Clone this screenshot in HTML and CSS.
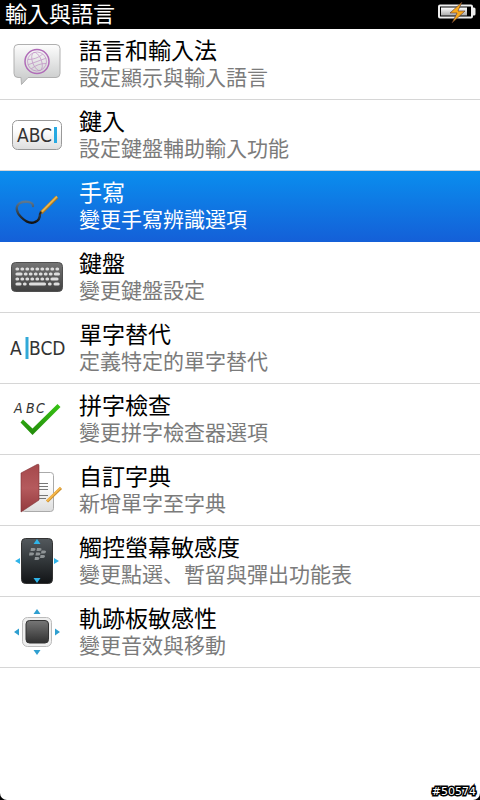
FILE: index.html
```html
<!DOCTYPE html>
<html lang="zh-Hant">
<head>
<meta charset="utf-8">
<meta name="viewport" content="width=device-width, initial-scale=1">
<title>輸入與語言</title>
<link rel="stylesheet" href="styles.css">
</head>
<body>
<div class="screen">
  <header class="bar">
    <h1 class="bar-title">輸入與語言</h1>
    <svg class="battery" viewBox="0 0 40 26" role="img" aria-label="充電中">
      <defs><linearGradient id="cell" x2="0" y2="1"><stop offset="0" stop-color="#fff"/><stop offset="1" stop-color="#aaa"/></linearGradient></defs>
      <path d="M2 4.500h31a2 2 0 0 1 2 2v1h1q1.500 0 1.500 1.500v5q0 1.500-1.500 1.500h-1v1a2 2 0 0 1-2 2H2a2 2 0 0 1-2-2v-10a2 2 0 0 1 2-2z" fill="#eee"/>
      <path d="M2 6.500h31v10H2z" fill="#000"/>
      <path d="M3 7.500h26v8H3z" fill="url(#cell)"/>
      <path d="M24 2L12 13h7l-5 10 13-12h-7z" fill="#f8a91c" stroke="#533" stroke-width=".6"/>
    </svg>
  </header>
  <nav class="list">
    <a class="row" href="#language">
      <svg class="icon" viewBox="0 0 70 70" aria-hidden="true">
        <defs><linearGradient id="bubble" x2="0" y2="1"><stop offset="0" stop-color="#fdfdfd"/><stop offset="1" stop-color="#c4c6c6"/></linearGradient></defs>
        <path d="M18 15.500h38q4 0 4 4v25q0 4-4 4H28l-6.500 7-.5-7h-3q-4 0-4-4v-25q0-4 4-4z" fill="url(#bubble)" stroke="#b0b0b0"/>
        <g fill="none" stroke="#b06cb8"><circle cx="37" cy="32.500" r="12" stroke-width="1.500"/>
        <g stroke-width=".7" opacity=".65" transform="rotate(-20 37 32.500)"><circle cx="37" cy="32.500" r="9.500"/><ellipse cx="37" cy="32.500" rx="4.500" ry="9.500"/><path d="M27.500 32.500h19M29 27.500q8 3 16 0M29 37.500q8-3 16 0"/></g></g>
      </svg>
      <span class="text"><span class="name">語言和輸入法</span><span class="note">設定顯示與輸入語言</span></span>
    </a>
    <a class="row" href="#typing">
      <svg class="icon" viewBox="0 0 70 70" aria-hidden="true">
        <defs><linearGradient id="key" x2="0" y2="1"><stop offset=".3" stop-color="#fff"/><stop offset="1" stop-color="#ddd"/></linearGradient></defs>
        <rect x="12.500" y="20.500" width="49" height="29" rx="5" fill="url(#key)" stroke="#999"/>
        <text class="glyphs" x="17" y="42" font-size="19">ABC</text>
        <path d="M54 27h3v16h-3z" fill="#27a9e1"/>
      </svg>
      <span class="text"><span class="name">鍵入</span><span class="note">設定鍵盤輔助輸入功能</span></span>
    </a>
    <a class="row selected" href="#handwriting" aria-current="true">
      <svg class="icon" viewBox="0 0 70 70" aria-hidden="true">
        <defs><linearGradient id="ink" x1="0" y1="0" x2="0" y2="1"><stop offset="0" stop-color="#5d7890"/><stop offset="1" stop-color="#111"/></linearGradient></defs>
        <path d="M33 35c0-5-9-5-13-3-5 3-4 9 1 14 5 5 10 7 14 5 3-1 5-4 5-8" fill="none" stroke="url(#ink)" stroke-width="2.400" stroke-linecap="round"/>
        <path d="M41 42L57 26" stroke="#a57626" stroke-width="3.500"/><path d="M42 40.500L57 25.500" stroke="#e9b44c" stroke-width="2"/><path d="M39 44l1-4 2 2z" fill="#222"/>
      </svg>
      <span class="text"><span class="name">手寫</span><span class="note">變更手寫辨識選項</span></span>
    </a>
    <a class="row" href="#keyboard">
      <svg class="icon" viewBox="0 0 70 70" aria-hidden="true">
        <defs><linearGradient id="board" x2="0" y2="1"><stop offset="0" stop-color="#757575"/><stop offset="1" stop-color="#404040"/></linearGradient></defs>
        <rect x="11.500" y="20.500" width="51" height="29" rx="4" fill="url(#board)" stroke="#505050"/>
        <g stroke="#ddd" stroke-width="3.200" stroke-linecap="round" fill="none"><path d="M17 27h.6m4.400 0h.6m4.400 0h.6m4.400 0h.6m4.400 0h.6m4.400 0h.6m4.400 0h.6m4.400 0h.6m4.400 0h.6"/><path d="M17 32h4m4.400 0h.6m4.400 0h.6m4.400 0h.6m4.400 0h.6m4.400 0h.6m4.400 0h.6m4.400 0h3"/><path d="M17 37h.6m4.400 0h.6m4.400 0h.6m4.400 0h.6m4.400 0h.6m4.400 0h.6m4.400 0h.6m4.400 0h5"/><path d="M17 42h3m4.500 0h.6m5.400 0h14m5 0h.6m5 0h3"/></g>
      </svg>
      <span class="text"><span class="name">鍵盤</span><span class="note">變更鍵盤設定</span></span>
    </a>
    <a class="row" href="#substitution">
      <svg class="icon" viewBox="0 0 70 70" aria-hidden="true">
        <text class="glyphs" x="10" y="42" font-size="19">A</text>
        <path d="M25.500 24h3v22h-3z" fill="#31a9d8"/>
        <text class="glyphs" x="29" y="42" font-size="19">BCD</text>
      </svg>
      <span class="text"><span class="name">單字替代</span><span class="note">定義特定的單字替代</span></span>
    </a>
    <a class="row" href="#spelling">
      <svg class="icon" viewBox="0 0 70 70" aria-hidden="true">
        <defs><linearGradient id="tick" x2="0" y2="1"><stop offset="0" stop-color="#37c414"/><stop offset="1" stop-color="#228a0b"/></linearGradient></defs>
        <text class="glyphs slanted" x="14 26 36" y="29" font-size="14">ABC</text>
        <path d="M23 35.500l9.500 9L57.500 20l3 3L32.500 51 20.500 38.500z" fill="url(#tick)"/>
      </svg>
      <span class="text"><span class="name">拼字檢查</span><span class="note">變更拼字檢查器選項</span></span>
    </a>
    <a class="row" href="#dictionary">
      <svg class="icon" viewBox="0 0 70 70" aria-hidden="true">
        <defs><linearGradient id="cover" x2="0" y2="1"><stop offset="0" stop-color="#a5484b"/><stop offset=".5" stop-color="#b55a5d"/><stop offset="1" stop-color="#93393d"/></linearGradient></defs>
        <rect x="21.500" y="17.500" width="32" height="39" rx="3" fill="url(#key)" stroke="#aaa"/>
        <path d="M38 28.500h10M38 31.500h10M38 34.500h10M38 40.500h10M38 43.500h8" stroke="#777"/>
        <path d="M21 18L37 9.500q2-1 2 1V45L21 57z" fill="url(#cover)" stroke="#7f3034" stroke-width=".6"/>
        <path d="M47 46.500L61 33" stroke="#c98f30" stroke-width="3"/><path d="M47 46L60.500 32.500" stroke="#f5b74b" stroke-width="1.800"/>
      </svg>
      <span class="text"><span class="name">自訂字典</span><span class="note">新增單字至字典</span></span>
    </a>
    <a class="row" href="#touch">
      <svg class="icon" viewBox="0 0 70 70" aria-hidden="true">
        <defs><linearGradient id="phone" x2="0" y2="1"><stop offset="0" stop-color="#53595d"/><stop offset="1" stop-color="#111416"/></linearGradient></defs>
        <rect x="21.500" y="12.500" width="31" height="45" rx="4" fill="url(#phone)" stroke="#333"/>
        <path d="M37 13l3.500 5h-7zM37 57l3.500-5h-7zM15 35l5-3v6zM59 35l-5-3v6z" fill="#2fb4e9"/>
        <path d="M31 22h3q2 0 1.500 1.500t-2.500 1.500h-2.500zM37 22h3q2 0 1.500 1.500t-2.500 1.500h-2.500zM29.500 26.500h3q2 0 1.500 1.500t-2.500 1.500H29zM36 26.500h3q2 0 1.500 1.500t-2.500 1.500h-2.500zM41.500 24.500h3q2 0 1.500 1.500t-2.500 1.500H41zM40.500 29h3q2 0 1.500 1.500t-2.500 1.500H40zM35 31h3q2 0 1.500 1.500T37 34h-2.500z" fill="#8f9496"/>
      </svg>
      <span class="text"><span class="name">觸控螢幕敏感度</span><span class="note">變更點選、暫留與彈出功能表</span></span>
    </a>
    <a class="row" href="#trackpad">
      <svg class="icon" viewBox="0 0 70 70" aria-hidden="true">
        <defs><linearGradient id="pad" x2="0" y2="1"><stop offset="0" stop-color="#777"/><stop offset="1" stop-color="#303030"/></linearGradient></defs>
        <rect x="22.500" y="20.500" width="29" height="29" rx="5" fill="#eee" stroke="#bbb"/>
        <rect x="26" y="23.500" width="22.500" height="22.500" rx="3.500" fill="url(#pad)" stroke="#333"/>
        <path d="M37 12l3.500 5h-7zM37 58l3.500-5h-7zM14 35l5-3.500v7zM60 35l-5-3.500v7z" fill="#2f9fd0"/>
      </svg>
      <span class="text"><span class="name">軌跡板敏感性</span><span class="note">變更音效與移動</span></span>
    </a>
  </nav>
  <span class="tag">#50574</span>
</div>
</body>
</html>
```
FILE: styles.css
```css
* {
  box-sizing: border-box;
}

body {
  margin: 0;
  background: #000;
  font-family: "Noto Sans CJK JP", sans-serif;
  font-feature-settings: "locl" 0;
}

.screen {
  position: relative;
  min-height: 100vh;
  background: #fff;
  border-radius: 0 0 7px 7px;
}

.bar {
  display: flex;
  align-items: flex-start;
  justify-content: space-between;
  height: 29px;
  padding: 0 2px 0 5px;
  background: #000;
  color: #fff;
}

.bar-title {
  margin: 0;
  font-size: 22px;
  line-height: 24px;
  font-weight: 400;
}

.battery {
  width: 40px;
  height: 26px;
  overflow: visible;
}

.list {
  display: flex;
  flex-direction: column;
}

.row {
  display: flex;
  height: 71px;
  border-bottom: 1px solid #d6d6d6;
  color: #000;
  text-decoration: none;
}

.icon {
  flex: none;
  width: 70px;
  height: 70px;
}

.glyphs {
  font-family: "DejaVu Sans Condensed", "DejaVu Sans", sans-serif;
  fill: #333;
}

.slanted {
  font-style: italic;
}

.text {
  display: flex;
  flex-direction: column;
  padding: 7px 0 0 9px;
}

.name {
  font-size: 23px;
  line-height: 27px;
}

.note {
  font-size: 21px;
  line-height: 27px;
  color: #7b7b7b;
}

.selected {
  border-bottom-color: #1460d8;
  background: linear-gradient(#0a8eee, #1460d8);
  color: #fff;
}

.selected .note {
  color: #fff;
}

.tag {
  position: absolute;
  right: 4px;
  bottom: 1px;
  color: #fff;
  font: 11px/14px "DejaVu Sans", sans-serif;
  -webkit-text-stroke: 3px #000;
  paint-order: stroke fill;
}
```
